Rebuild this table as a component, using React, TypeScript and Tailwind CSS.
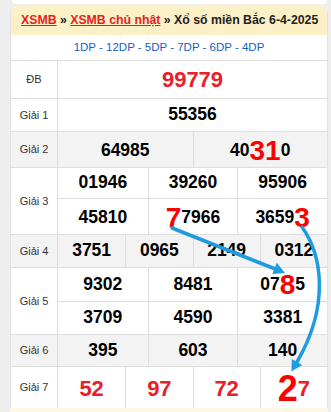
import type { ReactNode } from 'react';

function Big({ children, size = 'text-[28px]' }: { children: ReactNode; size?: string }) {
  return <span className={`${size} leading-[0] text-[#ff0000]`}>{children}</span>;
}

function Label({ children }: { children: ReactNode }) {
  return (
    <div className="flex w-[47px] flex-none items-center justify-center border-r border-[#dddddd] text-[11px] font-normal text-[#333]">
      {children}
    </div>
  );
}

function Cells({
  items,
  cols,
  h,
  last,
  pad = '',
}: {
  items: ReactNode[];
  cols: 2 | 3 | 4;
  h: string;
  last?: boolean;
  pad?: string;
}) {
  const grid = cols === 2 ? 'grid-cols-2' : cols === 3 ? 'grid-cols-3' : 'grid-cols-4';
  return (
    <div className={`grid ${grid} ${h} ${last ? '' : 'border-b border-[#dddddd]'}`}>
      {items.map((it, i) => (
        <div
          key={i}
          className={`flex items-center justify-center leading-none ${pad} ${i > 0 ? 'border-l border-[#dddddd]' : ''}`}
        >
          {it}
        </div>
      ))}
    </div>
  );
}

export default function App() {
  return (
    <div className="relative h-[412px] w-[331px] overflow-hidden bg-[#eeeeee] font-['Liberation_Sans',Arial,sans-serif]">
      {/* tail of the card above */}
      <div className="ml-[12px] h-[4px] w-[315px] rounded-b-[4px] bg-white" />

      <div className="ml-[10px] mt-[2px] w-[318px] overflow-hidden rounded-t-[7px] border-x border-[#e2e2e2] bg-white">
        <div className="flex h-[29px] items-center whitespace-nowrap bg-[#fcf1c6] pl-[10px] text-[12.3px] font-bold text-[#222]">
          <span className="text-[#e41f1f] underline">XSMB</span>
          <span>&nbsp;»&nbsp;</span>
          <span className="text-[#e41f1f] underline">XSMB chủ nhật</span>
          <span>&nbsp;» Xổ số miền Bắc 6-4-2025</span>
        </div>

        <div className="flex h-[26px] items-center justify-center border-b border-[#dddddd] text-[11.5px] text-[#1560c8]">
          1DP - 12DP - 5DP - 7DP - 6DP - 4DP
        </div>

        <div className="text-[17.5px] font-bold text-black">
          {/* ĐB */}
          <div className="flex h-[38px] border-b border-[#dddddd]">
            <Label>ĐB</Label>
            <div className="flex flex-1 items-center justify-center text-[22px] leading-none text-[#e8202a]">99779</div>
          </div>

          {/* Giải 1 */}
          <div className="flex h-[33px] border-b border-[#dddddd]">
            <Label>Giải 1</Label>
            <div className="flex flex-1 items-center justify-center leading-none">55356</div>
          </div>

          {/* Giải 2 */}
          <div className="flex h-[36px] border-b border-[#dddddd] bg-[#f3f3f3]">
            <Label>Giải 2</Label>
            <div className="flex-1">
              <Cells
                cols={2}
                h="h-full"
                last
                pad="pt-[3px]"
                items={[
                  '64985',
                  <>
                    40<Big>31</Big>0
                  </>,
                ]}
              />
            </div>
          </div>

          {/* Giải 3 */}
          <div className="flex h-[67px] border-b border-[#dddddd]">
            <Label>Giải 3</Label>
            <div className="flex flex-1 flex-col">
              <Cells cols={3} h="h-[31px]" items={['01946', '39260', '95906']} />
              <div className="flex-1">
                <Cells
                  cols={3}
                  h="h-full"
                  last
                  pad="pt-[2px]"
                  items={[
                    '45810',
                    <>
                      <Big>7</Big>7966
                    </>,
                    <>
                      3659<Big>3</Big>
                    </>,
                  ]}
                />
              </div>
            </div>
          </div>

          {/* Giải 4 */}
          <div className="flex h-[33px] border-b border-[#dddddd] bg-[#f3f3f3]">
            <Label>Giải 4</Label>
            <div className="flex-1">
              <Cells cols={4} h="h-full" last items={['3751', '0965', '2149', '0312']} />
            </div>
          </div>

          {/* Giải 5 */}
          <div className="flex h-[67px] border-b border-[#dddddd]">
            <Label>Giải 5</Label>
            <div className="flex flex-1 flex-col">
              <Cells
                cols={3}
                h="h-[34px]"
                items={[
                  '9302',
                  '8481',
                  <>
                    07<Big>8</Big>5
                  </>,
                ]}
              />
              <div className="flex-1">
                <Cells cols={3} h="h-full" last items={['3709', '4590', '3381']} />
              </div>
            </div>
          </div>

          {/* Giải 6 */}
          <div className="flex h-[32px] border-b border-[#dddddd] bg-[#f3f3f3]">
            <Label>Giải 6</Label>
            <div className="flex-1">
              <Cells cols={3} h="h-full" last items={['395', '603', '140']} />
            </div>
          </div>

          {/* Giải 7 */}
          <div className="flex h-[41px]">
            <Label>Giải 7</Label>
            <div className="flex-1 text-[22px] text-[#e8202a]">
              <Cells
                cols={4}
                h="h-full"
                last
                pad="pt-[3px]"
                items={[
                  '52',
                  '97',
                  '72',
                  <>
                    <Big size="text-[36px]">2</Big>7
                  </>,
                ]}
              />
            </div>
          </div>
        </div>
      </div>

      <div className="ml-[10px] h-[10px] w-[318px] bg-[#fdf8e6]" />

      {/* hand-drawn arrows */}
      <svg className="pointer-events-none absolute left-0 top-0" width="331" height="412" viewBox="0 0 331 412">
        <g stroke="#1d9ce0" strokeWidth="3.5" strokeLinecap="round" fill="none">
          <path d="M172 228 L274 268.5" />
          <path d="M302 227 C322 255 330 305 297 362" />
        </g>
        <g fill="#1d9ce0">
          <polygon points="285,273 272.3,273.9 276.8,262.8" />
          <polygon points="291.4,371.4 302.2,365.1 291.8,358.9" />
        </g>
      </svg>
    </div>
  );
}
